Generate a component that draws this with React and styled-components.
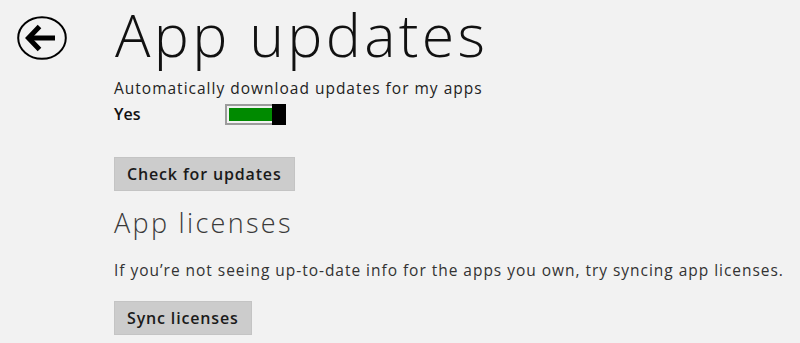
import React, { useState } from "react";
import styled, { createGlobalStyle } from "styled-components";

// global

const GlobalStyle = createGlobalStyle`
  html, body {
    margin: 0;
    padding: 0;
    background: #f2f2f2;
  }
  body {
    font-family: "Open Sans", "Liberation Sans", sans-serif;
    color: #1a1a1a;
  }
`;

// style

const Page = styled.div`
  width: 800px;
  height: 343px;
  display: grid;
  grid-template-columns: 114px 1fr;
  background: #f2f2f2;
`;

const BackColumn = styled.div`
  padding: 16px 0 0 17px;
`;

const BackButton = styled.button`
  width: 50px;
  height: 44px;
  padding: 0;
  border: none;
  background: transparent;
  cursor: pointer;
  display: block;
`;

const Content = styled.div`
  display: flex;
  flex-direction: column;
  align-items: flex-start;
`;

const Title = styled.h1`
  margin: 0 0 0 1px;
  font-size: 59px;
  font-weight: 300;
  line-height: 68px;
  color: #111;
  letter-spacing: 3.3px;
  white-space: nowrap;
`;

const Label = styled.div`
  margin-top: 10px;
  font-size: 15.5px;
  line-height: 20px;
  letter-spacing: 1px;
  color: #222;
  white-space: nowrap;
`;

const ToggleRow = styled.div`
  display: flex;
  align-items: center;
  height: 26px;
  margin-top: 3px;
`;

const ToggleState = styled.span`
  width: 111px;
  font-size: 16px;
  font-weight: 600;
  color: #111;
`;

const ToggleTrack = styled.button`
  width: 61px;
  height: 21px;
  padding: 0;
  border: 2px solid #9c9c9c;
  background: #f2f2f2;
  display: flex;
  cursor: pointer;
  box-sizing: border-box;
`;

const ToggleFill = styled.span`
  flex: 1;
  margin: 2px 0 2px 2px;
  background: ${(p) => (p.$on ? "#008a00" : "#f2f2f2")};
`;

const ToggleThumb = styled.span`
  width: 14px;
  margin: -2px -2px -2px 0;
  background: #000;
`;

const ActionButton = styled.button`
  margin-top: ${(p) => p.$top}px;
  height: 34px;
  padding: 0 12px 0 12px;
  font-family: "Open Sans", "Liberation Sans", sans-serif;
  font-size: 16px;
  font-weight: 600;
  letter-spacing: 0.85px;
  color: #1a1a1a;
  background: #cccccc;
  border: 1px solid #c4c4c4;
  cursor: pointer;
  white-space: nowrap;
`;

const SectionTitle = styled.h2`
  margin: 12.5px 0 0;
  font-size: 27px;
  font-weight: 300;
  line-height: 37px;
  letter-spacing: 2.3px;
  color: #3a3a3a;
  white-space: nowrap;
`;

const Paragraph = styled.p`
  margin: 19.5px 0 0;
  font-size: 15.5px;
  line-height: 21px;
  letter-spacing: 0.97px;
  color: #333;
  white-space: nowrap;
`;

const BackIcon = () => (
  <svg width="50" height="44" viewBox="0 0 50 44">
    <ellipse cx="25" cy="22" rx="23.8" ry="20.8" fill="none" stroke="#000" strokeWidth="2" />
    <path d="M38 22 H14" stroke="#000" strokeWidth="5" fill="none" />
    <path d="M22.5 10.5 L11.5 22 L22.5 33.5" stroke="#000" strokeWidth="5" fill="none" strokeLinejoin="miter" />
  </svg>
);

const App = () => {
  const [autoUpdate, setAutoUpdate] = useState(true);

  return (
    <>
      <GlobalStyle />
      <Page>
        <BackColumn>
          <BackButton aria-label="Back">
            <BackIcon />
          </BackButton>
        </BackColumn>
        <Content>
          <Title>App updates</Title>
          <Label>Automatically download updates for my apps</Label>
          <ToggleRow>
            <ToggleState>{autoUpdate ? "Yes" : "No"}</ToggleState>
            <ToggleTrack onClick={() => setAutoUpdate(!autoUpdate)}>
              <ToggleFill $on={autoUpdate} />
              <ToggleThumb />
            </ToggleTrack>
          </ToggleRow>
          <ActionButton $top={30}>Check for updates</ActionButton>
          <SectionTitle>App licenses</SectionTitle>
          <Paragraph>
            If you’re not seeing up-to-date info for the apps you own, try syncing app licenses.
          </Paragraph>
          <ActionButton $top={20}>Sync licenses</ActionButton>
        </Content>
      </Page>
    </>
  );
};

export default App;
